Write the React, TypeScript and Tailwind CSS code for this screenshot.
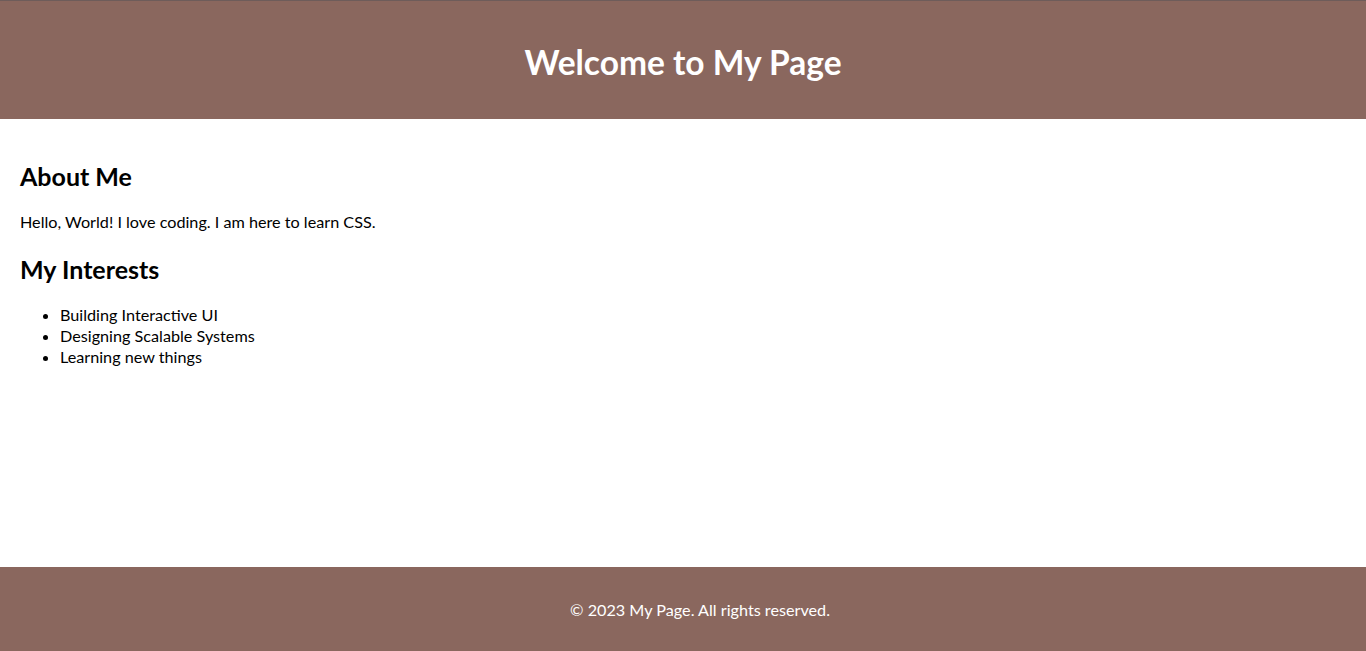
export default function App() {
  return (
    <div className="flex min-h-screen flex-col bg-white text-black" style={{ fontFamily: "Lato, 'Noto Sans', sans-serif" }}>
      <header className="flex h-[119px] items-center justify-center border-t border-[#6e5c5a] bg-[#8a675e] pt-[3px]">
        <h1 className="text-[33.5px] font-bold leading-[44px] text-white">Welcome to My Page</h1>
      </header>
      <main className="flex-1 px-5 pt-[41px]">
        <h2 className="text-[25px] font-bold leading-[32px]">About Me</h2>
        <p className="mt-[18px] text-[16.2px] leading-[24px]">Hello, World! I love coding. I am here to learn CSS.</p>
        <h2 className="mt-[19px] text-[25px] font-bold leading-[32px]">My Interests</h2>
        <ul className="mt-[19px] list-disc pl-10 text-[16.2px] leading-[21px]">
          <li>Building Interactive UI</li>
          <li>Designing Scalable Systems</li>
          <li>Learning new things</li>
        </ul>
      </main>
      <footer className="flex h-[84px] items-center justify-center bg-[#8a675e] pl-[34px] pt-[2px]">
        <p className="text-[16.2px] leading-[24px] text-white">© 2023 My Page. All rights reserved.</p>
      </footer>
    </div>
  );
}
